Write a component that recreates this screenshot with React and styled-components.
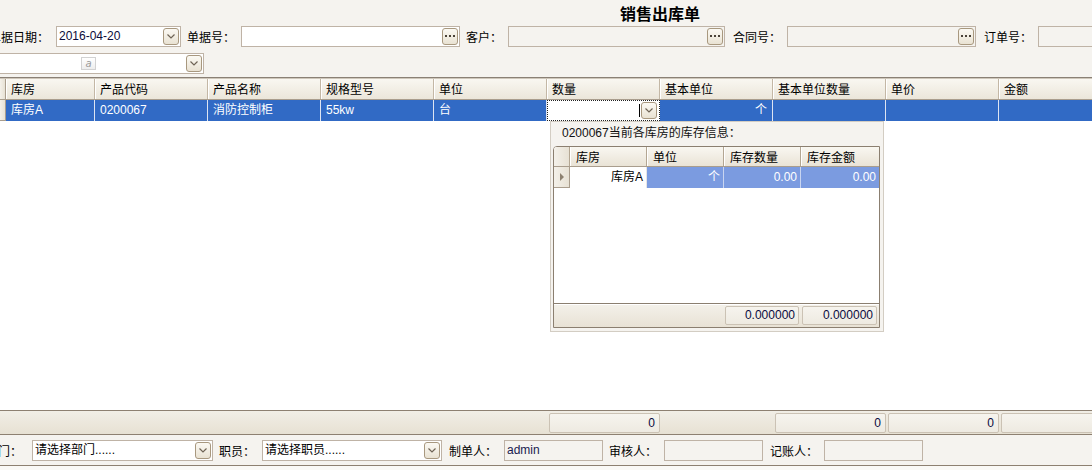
import React from 'react';
import styled, { createGlobalStyle } from 'styled-components';

const GlobalStyle = createGlobalStyle`
  html, body {
    margin: 0;
    padding: 0;
  }
  body {
    font-family: "Liberation Sans", "Noto Sans CJK SC", sans-serif;
    font-size: 12px;
    color: #000;
    background: #f5f3ef;
  }
`;

const Page = styled.div`
  width: 1092px;
  height: 470px;
  overflow: hidden;
  display: flex;
  flex-direction: column;
  background: #f5f3ef;
`;

const Top = styled.div`
  height: 77px;
  flex: none;
  border-bottom: 1px solid #8a8075;
`;

const Title = styled.div`
  height: 23px;
  padding: 3px 0 0 620px;
  box-sizing: border-box;
  font-family: "Noto Sans CJK SC", sans-serif;
  font-size: 16px;
  font-weight: 700;
  line-height: 20px;
  white-space: nowrap;
`;

const FormRow = styled.div`
  display: flex;
  align-items: center;
  height: 21px;
  margin-top: ${(p) => p.$top || 0}px;
  margin-left: ${(p) => p.$shift || 0}px;
  white-space: nowrap;
`;

const Label = styled.div`
  flex: none;
  width: ${(p) => p.$w}px;
  padding-left: ${(p) => p.$pad || 0}px;
  box-sizing: border-box;
  font-family: "Noto Sans CJK SC", sans-serif;
  font-size: 12px;
  line-height: 21px;
`;

const Box = styled.div`
  flex: none;
  display: flex;
  align-items: center;
  width: ${(p) => p.$w}px;
  height: 21px;
  box-sizing: border-box;
  border: 1px solid #bfb3a6;
  background: ${(p) => (p.$grey ? '#f5f3ef' : '#fff')};
  padding: 0 1px 0 2px;
  color: ${(p) => p.$color || '#0b0b3a'};
  overflow: hidden;
`;

const BoxText = styled.span`
  flex: 1;
  font-family: "Liberation Sans", "Noto Sans CJK SC", sans-serif;
  font-size: 12px;
  line-height: 19px;
`;

const Btn = styled.div`
  flex: none;
  width: 16px;
  height: 17px;
  box-sizing: border-box;
  margin-left: auto;
  border: 1px solid #a8987f;
  border-radius: 3px;
  background: linear-gradient(#fbf9f3, #e9e2d3);
  display: flex;
  align-items: center;
  justify-content: center;
`;

const StyleBadge = styled.span`
  flex: none;
  width: 15px;
  height: 13px;
  margin-left: ${(p) => p.$left}px;
  box-sizing: border-box;
  border: 1px solid #d2d2d2;
  background: linear-gradient(#fff, #eee);
  color: #9a9a9a;
  font-family: "DejaVu Sans", sans-serif;
  font-size: 10px;
  line-height: 11px;
  text-align: center;
  font-style: italic;
`;

const Chevron = () => (
  <svg width="8" height="5" viewBox="0 0 8 5">
    <polyline points="0.5,0.5 4,4 7.5,0.5" fill="none" stroke="#6f6456" strokeWidth="1.2" />
  </svg>
);

const Dots = () => (
  <svg width="10" height="3" viewBox="0 0 10 3">
    <rect x="0" y="0" width="2" height="2" fill="#4a4238" />
    <rect x="4" y="0" width="2" height="2" fill="#4a4238" />
    <rect x="8" y="0" width="2" height="2" fill="#4a4238" />
  </svg>
);

const Combo = ({ w, text, grey, color }) => (
  <Box $w={w} $grey={grey} $color={color}>
    <BoxText>{text}</BoxText>
    <Btn>
      <Chevron />
    </Btn>
  </Box>
);

const Picker = ({ w, grey }) => (
  <Box $w={w} $grey={grey}>
    <Btn>
      <Dots />
    </Btn>
  </Box>
);

/* ---------- main grid ---------- */

const Grid = styled.div`
  position: relative;
  height: 332px;
  flex: none;
  background: #fff;
`;

const HeaderRow = styled.div`
  display: flex;
  height: 22px;
  box-sizing: border-box;
  border-top: 1px solid #cfc7bb;
  border-bottom: 1px solid #a99d8d;
  background: linear-gradient(#f9f7f1, #ebe6da);
`;

const HeadCell = styled.div`
  flex: none;
  width: ${(p) => p.$w}px;
  box-sizing: border-box;
  border-right: 1px solid #c3b7a5;
  box-shadow: inset 1px 0 0 #fff;
  padding-left: 5px;
  font-family: "Noto Sans CJK SC", sans-serif;
  line-height: 20px;
  white-space: nowrap;
  overflow: hidden;
`;

const DataRow = styled.div`
  display: flex;
  height: 21px;
  background: #316ac5;
`;

const RowHead = styled.div`
  flex: none;
  width: ${(p) => p.$w}px;
  box-sizing: border-box;
  background: linear-gradient(90deg, #f4f1ea, #e7e1d4);
  border-right: 1px solid #a99d8d;
  border-bottom: 1px solid #a99d8d;
  display: flex;
  align-items: center;
  justify-content: center;
`;

const Cell = styled.div`
  flex: none;
  width: ${(p) => p.$w}px;
  box-sizing: border-box;
  border-right: 1px solid #dde4f2;
  padding: 0 5px;
  color: #fff;
  line-height: 21px;
  text-align: ${(p) => (p.$right ? 'right' : 'left')};
  white-space: nowrap;
  overflow: hidden;
`;

const EditCell = styled.div`
  flex: none;
  width: ${(p) => p.$w}px;
  box-sizing: border-box;
  background: #fff;
  border: 1px dotted #222;
  display: flex;
  align-items: center;
  padding-right: 2px;
`;

const Caret = styled.span`
  width: 1px;
  height: 13px;
  background: #000;
  margin-left: auto;
  margin-right: 1px;
`;

const EditBtn = styled(Btn)`
  margin-left: 0;
`;

/* ---------- stock popup ---------- */

const Popup = styled.div`
  position: absolute;
  left: 550px;
  top: 43px;
  width: 334px;
  height: 211px;
  box-sizing: border-box;
  border: 1px solid #d3cdc3;
  background: #f5f3ef;
  display: flex;
  flex-direction: column;
`;

const PopupTitle = styled.div`
  height: 24px;
  flex: none;
  padding-left: 11px;
  line-height: 22px;
  color: #111;
  white-space: nowrap;
`;

const StockGrid = styled.div`
  margin-left: 2px;
  width: 327px;
  height: 182px;
  box-sizing: border-box;
  border: 1px solid #8b7f70;
  border-top-left-radius: 4px;
  background: #fff;
  display: flex;
  flex-direction: column;
  overflow: hidden;
`;

const StockHead = styled.div`
  display: flex;
  height: 20px;
  flex: none;
  box-sizing: border-box;
  border-bottom: 1px solid #a99d8d;
  background: linear-gradient(#f9f7f1, #e9e3d6);
`;

const StockHeadCell = styled(HeadCell)`
  line-height: 19px;
  padding-left: 6px;
  border-right-color: #b3a692;
`;

const StockRow = styled.div`
  display: flex;
  height: 21px;
  flex: none;
`;

const StockCell = styled.div`
  flex: none;
  width: ${(p) => p.$w}px;
  box-sizing: border-box;
  border-right: 1px solid ${(p) => (p.$sel ? '#c9d5f0' : '#e6e6e6')};
  background: ${(p) => (p.$sel ? '#7b9be0' : '#fff')};
  color: ${(p) => (p.$sel ? '#fff' : '#000')};
  text-align: right;
  padding-right: 3px;
  line-height: 21px;
  white-space: nowrap;
  font-family: "Liberation Sans", "Noto Sans CJK SC", sans-serif;
`;

const Arrow = styled.span`
  width: 0;
  height: 0;
  border-top: 4px solid transparent;
  border-bottom: 4px solid transparent;
  border-left: 4px solid #8d8170;
`;

const StockFill = styled.div`
  flex: 1;
`;

const StockFoot = styled.div`
  height: 24px;
  flex: none;
  box-sizing: border-box;
  border-top: 1px solid #8b7f70;
  box-shadow: inset 0 1px 0 #fff;
  background: linear-gradient(#f4f1ea, #e8e2d5);
  display: flex;
  align-items: center;
  justify-content: flex-end;
  gap: 3px;
  padding-right: 2px;
`;

const SumBox = styled.div`
  flex: none;
  width: ${(p) => p.$w}px;
  height: ${(p) => p.$h || 20}px;
  box-sizing: border-box;
  border: 1px solid #cbc2b4;
  border-radius: 2px;
  background: linear-gradient(#f6f4ee, #eeeae1);
  text-align: right;
  padding-right: ${(p) => p.$pr || 4}px;
  line-height: ${(p) => (p.$h || 20) - 2}px;
  color: #0a0a40;
`;

/* ---------- summary + footer ---------- */

const SummaryBar = styled.div`
  height: 24px;
  flex: none;
  box-sizing: border-box;
  border-top: 1px solid #8d8071;
  background: linear-gradient(#f1eee6, #e7e1d3);
  display: flex;
  align-items: center;
`;

const SumSlot = styled.div`
  flex: none;
  width: ${(p) => p.$w}px;
  padding-left: 2px;
  box-sizing: border-box;
`;

const FooterBar = styled.div`
  height: 32px;
  flex: none;
  box-sizing: border-box;
  border-top: 1px solid #8d8071;
  border-bottom: 1px solid #8d8071;
  display: flex;
  align-items: center;
`;

const Rest = styled.div`
  flex: 1;
  background: #faf9f6;
`;

const cols = [
  { t: '库房', w: 89, v: '库房A' },
  { t: '产品代码', w: 113, v: '0200067' },
  { t: '产品名称', w: 113, v: '消防控制柜' },
  { t: '规格型号', w: 113, v: '55kw' },
  { t: '单位', w: 113, v: '台' },
  { t: '数量', w: 113, edit: true, sum: '0' },
  { t: '基本单位', w: 113, v: '个', right: true },
  { t: '基本单位数量', w: 113, sum: '0' },
  { t: '单价', w: 113, sum: '0' },
  { t: '金额', w: 120, sum: '' },
];

const stockCols = [
  { t: '库房', w: 77, v: '库房A' },
  { t: '单位', w: 77, v: '个', sel: true },
  { t: '库存数量', w: 77, v: '0.00', sel: true },
  { t: '库存金额', w: 79, v: '0.00', sel: true },
];

export default function App() {
  return (
    <Page>
      <GlobalStyle />
      <Top>
        <Title>销售出库单</Title>
        <FormRow $top={3} $shift={-11}>
          <Label $w={67}>单据日期：</Label>
          <Combo w={125} text="2016-04-20" />
          <Label $w={60} $pad={6}>单据号：</Label>
          <Picker w={219} />
          <Label $w={48} $pad={6}>客户：</Label>
          <Picker w={217} grey />
          <Label $w={62} $pad={8}>合同号：</Label>
          <Picker w={189} grey />
          <Label $w={62} $pad={8}>订单号：</Label>
          <Box $w={80} $grey />
        </FormRow>
        <FormRow $top={6} $shift={-20}>
          <Box $w={224}>
            <StyleBadge $left={98}>a</StyleBadge>
            <Btn>
              <Chevron />
            </Btn>
          </Box>
        </FormRow>
      </Top>

      <Grid>
        <HeaderRow>
          <RowHead $w={6} style={{ borderBottom: 'none' }} />
          {cols.map((c) => (
            <HeadCell key={c.t} $w={c.w}>
              {c.t}
            </HeadCell>
          ))}
        </HeaderRow>
        <DataRow>
          <RowHead $w={6} />
          {cols.map((c) =>
            c.edit ? (
              <EditCell key={c.t} $w={c.w}>
                <Caret />
                <EditBtn>
                  <Chevron />
                </EditBtn>
              </EditCell>
            ) : (
              <Cell key={c.t} $w={c.w} $right={c.right}>
                {c.v}
              </Cell>
            )
          )}
        </DataRow>

        <Popup>
          <PopupTitle>0200067当前各库房的库存信息：</PopupTitle>
          <StockGrid>
            <StockHead>
              <RowHead $w={16} style={{ borderBottom: 'none', borderRightColor: '#b3a692' }} />
              {stockCols.map((c) => (
                <StockHeadCell key={c.t} $w={c.w}>
                  {c.t}
                </StockHeadCell>
              ))}
            </StockHead>
            <StockRow>
              <RowHead $w={16}>
                <Arrow />
              </RowHead>
              {stockCols.map((c) => (
                <StockCell key={c.t} $w={c.w} $sel={c.sel}>
                  {c.v}
                </StockCell>
              ))}
            </StockRow>
            <StockFill />
            <StockFoot>
              <SumBox $w={74} $h={19} $pr={3}>0.000000</SumBox>
              <SumBox $w={75} $h={19} $pr={3}>0.000000</SumBox>
            </StockFoot>
          </StockGrid>
        </Popup>
      </Grid>

      <SummaryBar>
        <SumSlot $w={6} />
        {cols.map((c) => (
          <SumSlot key={c.t} $w={c.w}>
            {c.sum !== undefined && <SumBox $w={c.w === 120 ? 118 : 111}>{c.sum}</SumBox>}
          </SumSlot>
        ))}
      </SummaryBar>

      <FooterBar>
        <FormRow $shift={-14}>
          <Label $w={46}>部门：</Label>
          <Combo w={181} text="请选择部门......" color="#000" />
          <Label $w={49} $pad={6}>职员：</Label>
          <Combo w={180} text="请选择职员......" color="#000" />
          <Label $w={62} $pad={7}>制单人：</Label>
          <Box $w={99} $grey $color="#1a1a50">
            <BoxText>admin</BoxText>
          </Box>
          <Label $w={61} $pad={6}>审核人：</Label>
          <Box $w={99} $grey />
          <Label $w={61} $pad={7}>记账人：</Label>
          <Box $w={99} $grey />
        </FormRow>
      </FooterBar>
      <Rest />
    </Page>
  );
}
